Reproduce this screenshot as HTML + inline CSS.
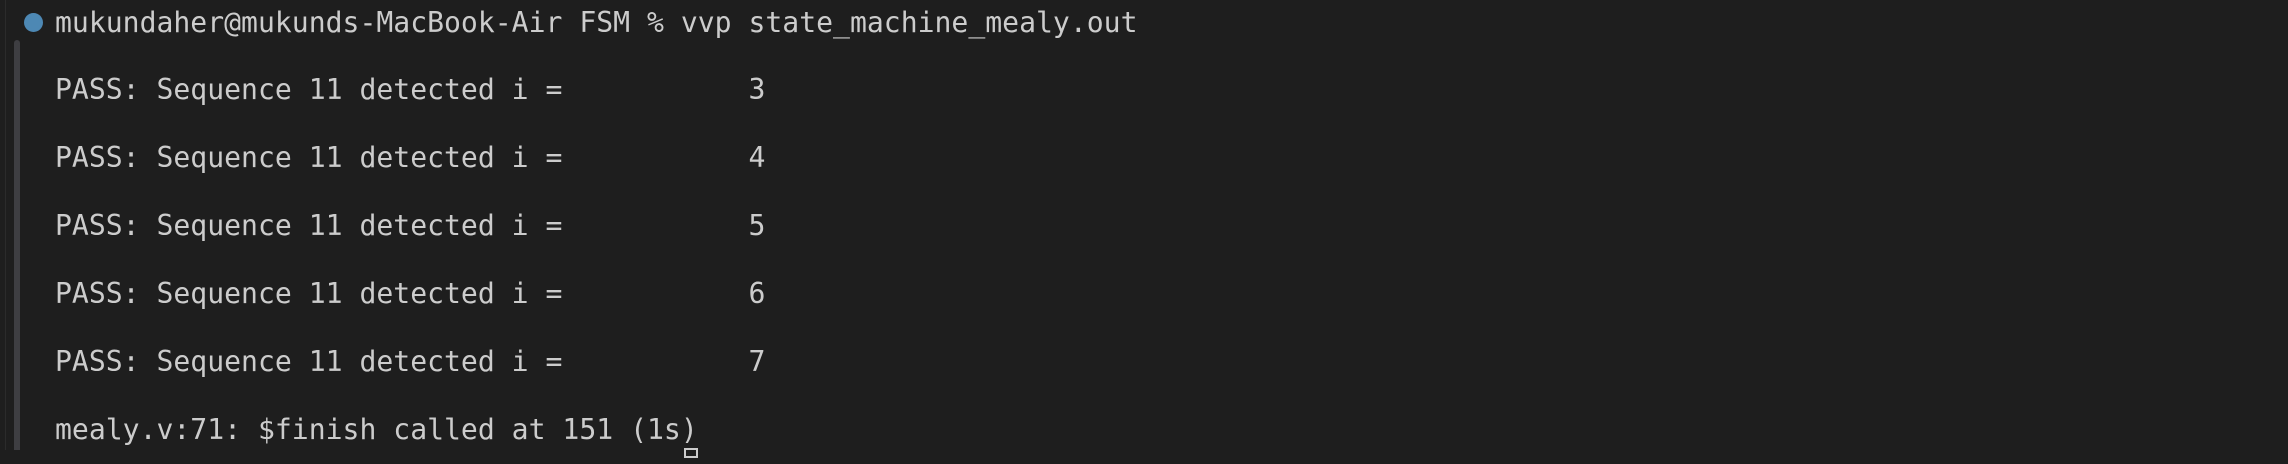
<!DOCTYPE html>
<html><head><meta charset="utf-8"><style>
html,body{margin:0;padding:0;background:#1e1e1e;width:2288px;height:450px;overflow:hidden}
.l{position:absolute;left:55px;font-family:"DejaVu Sans Mono","Liberation Mono",monospace;font-size:28.1px;line-height:68px;height:68px;color:#cccccc;white-space:pre}
</style></head><body>
<div style="position:absolute;left:5px;top:0;width:1px;height:450px;background:#2b2b2b"></div>
<div style="position:absolute;left:14px;top:40px;width:6px;height:410px;background:#3e3e42;border-radius:3px 3px 0 0"></div>
<div style="position:absolute;left:24px;top:13px;width:19px;height:19px;border-radius:50%;background:#4d88b4"></div>
<div class="l" style="top:-11px">mukundaher@mukunds-MacBook-Air FSM % vvp state_machine_mealy.out</div>
<div class="l" style="top:56px">PASS: Sequence 11 detected i =           3</div>
<div class="l" style="top:124px">PASS: Sequence 11 detected i =           4</div>
<div class="l" style="top:192px">PASS: Sequence 11 detected i =           5</div>
<div class="l" style="top:260px">PASS: Sequence 11 detected i =           6</div>
<div class="l" style="top:328px">PASS: Sequence 11 detected i =           7</div>
<div class="l" style="top:396px">mealy.v:71: $finish called at 151 (1s)</div>
<div style="position:absolute;left:684px;top:448px;width:14px;height:10px;border:2px solid #cccccc;box-sizing:border-box"></div>
</body></html>
